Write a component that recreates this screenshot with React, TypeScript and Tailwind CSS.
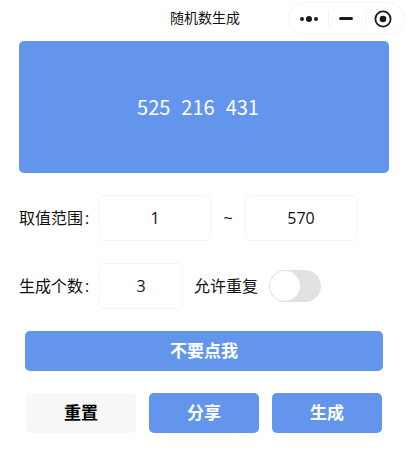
export default function App() {
  const font = { fontFamily: '"Open Sans", "Noto Sans CJK SC", sans-serif' };
  const cjk = { fontFamily: '"Noto Sans CJK SC", sans-serif' };
  return (
    <div className="w-[409px] h-[457px] bg-white overflow-hidden text-[#111] flex flex-col" style={font}>
      <div className="relative h-[41px] shrink-0 flex items-center justify-center pb-[5px] pl-[1px]">
        <span className="text-[14px] leading-none">随机数生成</span>
        <div className="absolute left-[288px] top-[2px] w-[117px] h-[33px] rounded-full border border-[#f5f5f5] flex items-center">
          <div className="w-[39px] flex justify-center">
            <svg width="20" height="8" viewBox="0 0 20 8">
              <circle cx="3" cy="4" r="2" fill="#1a1a1a" />
              <circle cx="10" cy="4" r="3" fill="#1a1a1a" />
              <circle cx="17" cy="4" r="2" fill="#1a1a1a" />
            </svg>
          </div>
          <div className="w-px h-[16px] bg-[#f3f3f3]" />
          <div className="w-[37px] flex justify-center pr-[3px]">
            <div className="w-[14px] h-[3px] bg-[#1a1a1a] rounded-full" />
          </div>
          <div className="w-px h-[16px] bg-[#f3f3f3]" />
          <div className="flex-1 flex justify-center pr-[5px]">
            <svg width="18" height="18" viewBox="0 0 18 18">
              <circle cx="9" cy="9" r="7.6" fill="none" stroke="#1a1a1a" strokeWidth="1.8" />
              <circle cx="9" cy="9" r="3.3" fill="#1a1a1a" />
            </svg>
          </div>
        </div>
      </div>

      <div className="ml-[19px] w-[370px] h-[132px] shrink-0 bg-[#6495ed] rounded-[5px] flex items-center justify-center text-white text-[20px] gap-[11px] pr-[12px] pb-[1px]" style={cjk}>
        <span>525</span>
        <span>216</span>
        <span>431</span>
      </div>

      <div className="mt-[22px] pl-[19px] flex items-center h-[46px] text-[16px]">
        <span className="w-[80px] shrink-0 flex">取值范围<span className="ml-[2px]">:</span></span>
        <div className="w-[112px] h-[46px] rounded-[5px] border border-[#f5f5f5] flex items-center justify-center">1</div>
        <span className="w-[34px] text-center text-[16px]">~</span>
        <div className="w-[112px] h-[46px] rounded-[5px] border border-[#f5f5f5] flex items-center justify-center">570</div>
      </div>

      <div className="mt-[22px] pl-[19px] flex items-center h-[46px] text-[16px]">
        <span className="w-[80px] shrink-0 flex">生成个数<span className="ml-[2px]">:</span></span>
        <div className="w-[84px] h-[46px] rounded-[5px] border border-[#f5f5f5] flex items-center justify-center">3</div>
        <span className="ml-[11px] w-[75px] shrink-0">允许重复</span>
        <div className="w-[52px] h-[32px] rounded-full bg-[#e2e2e2] flex items-center pl-[1px]">
          <div className="w-[30px] h-[30px] rounded-full bg-white" />
        </div>
      </div>

      <div className="mt-[22px] ml-[25px] w-[358px] h-[40px] rounded-[5px] bg-[#6495ed] text-white text-[17px] font-bold flex items-center justify-center">
        不要点我
      </div>

      <div className="mt-[22px] ml-[26px] flex gap-[13px] text-[17px] font-bold">
        <div className="w-[110px] h-[40px] rounded-[5px] bg-[#f8f8f8] text-black flex items-center justify-center">重置</div>
        <div className="w-[110px] h-[40px] rounded-[5px] bg-[#6495ed] text-white flex items-center justify-center">分享</div>
        <div className="w-[110px] h-[40px] rounded-[5px] bg-[#6495ed] text-white flex items-center justify-center">生成</div>
      </div>
    </div>
  );
}
